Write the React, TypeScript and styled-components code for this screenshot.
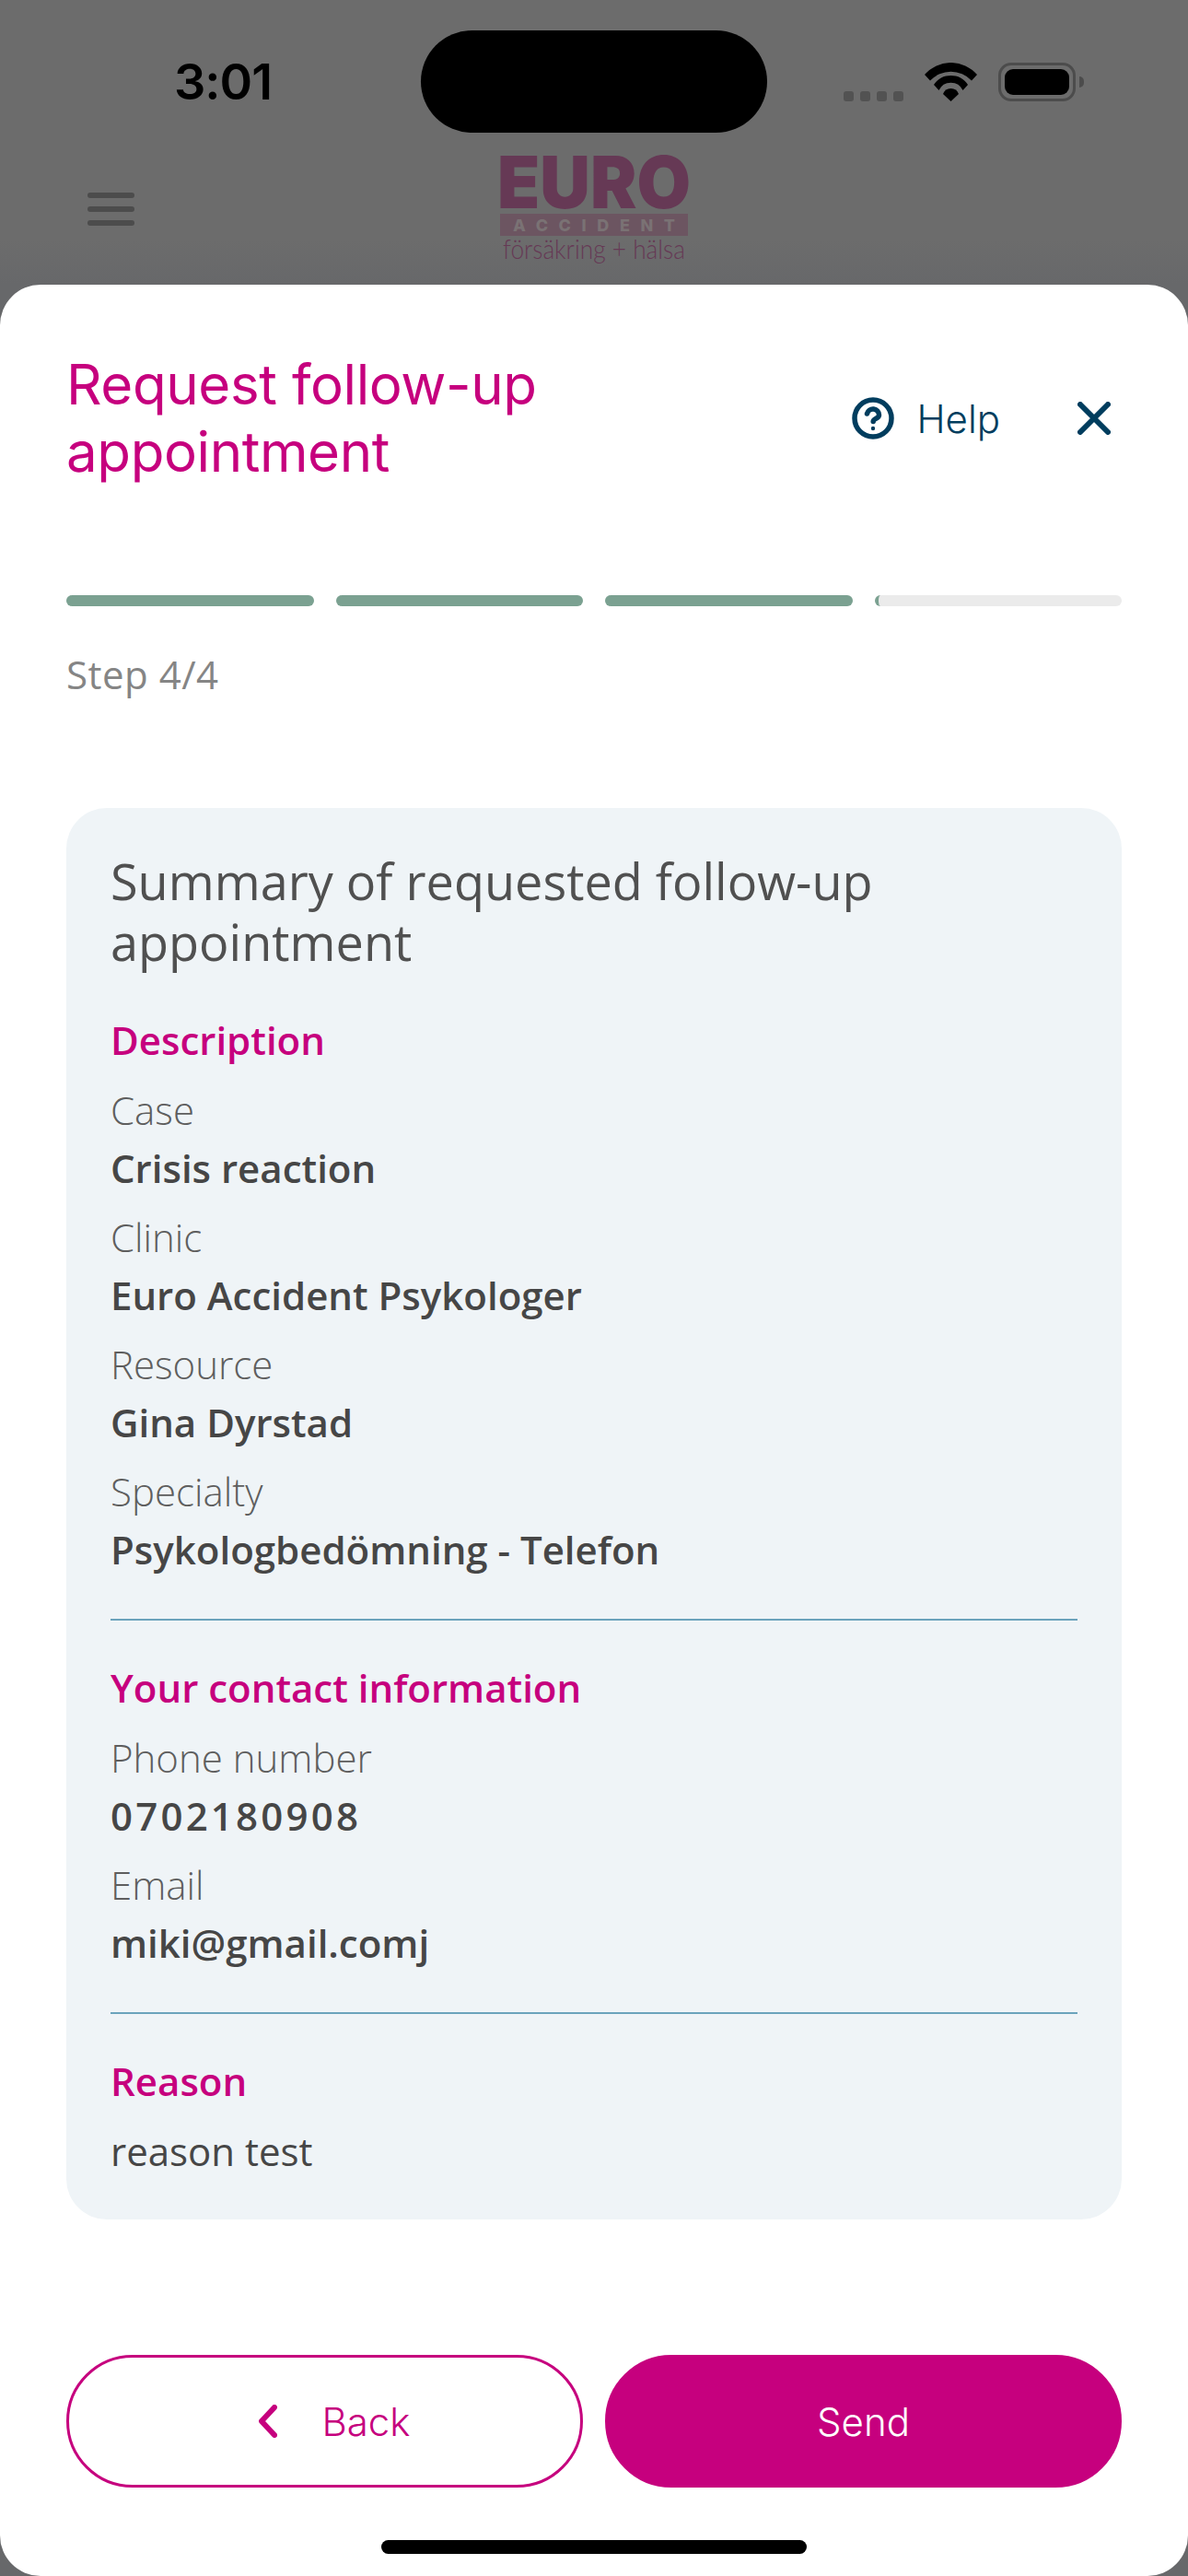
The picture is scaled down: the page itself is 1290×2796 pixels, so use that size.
import styled, { createGlobalStyle } from "styled-components";

const GlobalStyle = createGlobalStyle`
    html, body {
        margin: 0;
        padding: 0;
        background: #6b6b6b;
    }

    * {
        box-sizing: border-box;
    }
`;

const Screen = styled.div`
    width: 1290px;
    height: 2796px;
    position: relative;
    overflow: hidden;
    display: flex;
    flex-direction: column;
    background: linear-gradient(#6c6c6c, #6c6c6c 260px, #67686a 309px);
    font-family: Inter, "Liberation Sans", sans-serif;
`;

const StatusBar = styled.div`
    display: grid;
    grid-template-columns: 457px 376px 1fr;
    align-items: center;
    height: 111px;
    margin-top: 33px;
`;

const Time = styled.div`
    font-size: 54px;
    font-weight: 600;
    color: #000;
    padding-left: 189px;
    letter-spacing: -1px;
`;

const Island = styled.div`
    height: 111px;
    border-radius: 56px;
    background: #000;
`;

const StatusIcons = styled.div`
    display: flex;
    align-items: flex-end;
    height: 42px;
    padding-left: 83px;
    margin-top: 1px;
`;

const SignalDots = styled.div`
    display: flex;
    gap: 7px;
    margin-right: 23px;
`;

const SignalDot = styled.span`
    width: 11px;
    height: 11px;
    border-radius: 3px;
    background: #525252;
`;

const Battery = styled.div`
    width: 84px;
    height: 42px;
    margin-left: 23px;
    padding: 4px;
    border: 3px solid #4c4c4c;
    border-radius: 14px;
    position: relative;

    &::before {
        content: "";
        display: block;
        height: 100%;
        border-radius: 9px;
        background: #000;
    }

    &::after {
        content: "";
        position: absolute;
        right: -12px;
        top: 12px;
        width: 5px;
        height: 12px;
        border-radius: 0 6px 6px 0;
        background: #4c4c4c;
    }
`;

const Nav = styled.div`
    display: grid;
    grid-template-columns: 1fr auto 1fr;
    align-items: center;
    height: 165px;
`;

const Burger = styled.div`
    display: flex;
    flex-direction: column;
    gap: 9px;
    width: 51px;
    margin-left: 95px;

    span {
        height: 6px;
        border-radius: 3px;
        background: #4c4c4c;
    }
`;

const Sheet = styled.div`
    flex: 1;
    display: flex;
    flex-direction: column;
    padding: 0 72px;
    border-radius: 44px;
    background: #fff;
`;

const SheetHeader = styled.div`
    display: flex;
    justify-content: space-between;
    align-items: center;
    padding-top: 72px;
`;

const Title = styled.h1`
    margin: 0;
    width: 600px;
    font-size: 60px;
    font-weight: 400;
    letter-spacing: -0.4px;
    line-height: 73px;
    color: #c6007e;
`;

const HeaderActions = styled.div`
    display: flex;
    align-items: center;
    margin-right: 12px;
    color: #003d5e;
`;

const HelpLabel = styled.span`
    font-size: 42px;
    font-weight: 300;
    margin-left: 24px;
    margin-right: 84px;
`;

const Progress = styled.div`
    display: grid;
    grid-template-columns: repeat(4, 1fr);
    gap: 24px;
    margin-top: 119px;
`;

const ProgressTrack = styled.div<{ $done?: boolean }>`
    height: 12px;
    border-radius: 6px;
    overflow: hidden;
    background: ${(p) => (p.$done ? "#7ba191" : "#ebebeb")};
    border-left: 4px solid #7ba191;
`;

const StepText = styled.div`
    margin-top: 42px;
    font-family: "Open Sans", "Liberation Sans", sans-serif;
    font-size: 42px;
    line-height: 63px;
    font-weight: 400;
    letter-spacing: 0.5px;
    color: #858585;
`;

const SummaryCard = styled.div`
    margin-top: 114px;
    padding: 46px 48px;
    height: 1532px;
    border-radius: 44px;
    background: #eff4f7;
    font-family: "Open Sans", "Liberation Sans", sans-serif;
`;

const SummaryTitle = styled.h2`
    margin: 0;
    font-size: 54px;
    font-weight: 400;
    line-height: 66px;
    color: #505050;
`;

const SectionHeading = styled.h3<{ $first?: boolean }>`
    margin: ${(p) => (p.$first ? "42px" : "41px")} 0 13px;
    font-size: 42px;
    font-weight: 600;
    line-height: 63px;
    color: #c6007e;
`;

const Field = styled.div`
    margin-top: 12px;
`;

const FieldLabel = styled.div`
    font-size: 42px;
    font-weight: 300;
    line-height: 63px;
    color: #5e5e5e;
`;

const FieldValue = styled.div<{ $numeric?: boolean }>`
    font-size: 42px;
    font-weight: 600;
    line-height: 63px;
    letter-spacing: ${(p) => (p.$numeric ? "3.2px" : "normal")};
    color: #464646;
`;

const Divider = styled.hr`
    height: 2px;
    margin: 44px 0 0;
    border: 0;
    background: #6ba3bc;
`;

const ReasonText = styled.div`
    font-size: 42px;
    font-weight: 400;
    line-height: 63px;
    color: #464646;
`;

const Actions = styled.div`
    display: grid;
    grid-template-columns: repeat(2, 1fr);
    gap: 24px;
    margin-top: auto;
    margin-bottom: 96px;
`;

const ActionButton = styled.button<{ $primary?: boolean }>`
    display: flex;
    align-items: center;
    justify-content: center;
    height: 144px;
    border-radius: 72px;
    border: 3px solid #c6007e;
    background: ${(p) => (p.$primary ? "#c6007e" : "#fff")};
    color: ${(p) => (p.$primary ? "#fff" : "#c6007e")};
    font-family: Inter, "Liberation Sans", sans-serif;
    font-size: 42px;
    font-weight: 300;
    padding: 0;

    svg {
        margin-left: 22px;
        margin-right: 48px;
    }
`;

const HomeBar = styled.div`
    position: absolute;
    left: 414px;
    bottom: 24px;
    width: 462px;
    height: 15px;
    border-radius: 8px;
    background: #000;
`;

const WifiIcon = () => (
    <svg width="57" height="42" viewBox="0 0 57 42" fill="#000">
        <path d="M0 13A37.7 37.7 0 0 1 57 13L51 19.5A31 31 0 0 0 6 19.5Z" />
        <path d="M10 24A22 22 0 0 1 47 24L41.5 30A14.3 14.3 0 0 0 15.5 30Z" />
        <path d="M20 34A9 9 0 0 1 37 34L28.5 42Z" />
    </svg>
);

const HelpIcon = () => (
    <svg width="46" height="46" viewBox="0 0 46 46" fill="none" stroke="#003d5e" strokeWidth="5.5" strokeLinecap="round">
        <circle cx="23" cy="23" r="20" />
        <path d="M16.5 18a6.6 6.6 0 0 1 13 1.5c0 3.8-6.3 4-6.3 7" />
        <circle cx="23" cy="34" r="1.2" fill="#003d5e" strokeWidth="2" />
    </svg>
);

const CloseIcon = () => (
    <svg width="36" height="36" viewBox="0 0 36 36" fill="none" stroke="#003d5e" strokeWidth="6" strokeLinecap="round">
        <path d="M3 3L33 33M33 3L3 33" />
    </svg>
);

const BackIcon = () => (
    <svg width="20" height="36" viewBox="0 0 20 36" fill="none" stroke="#c6007e" strokeWidth="6" strokeLinecap="round" strokeLinejoin="round">
        <path d="M17 3L3 18L17 33" />
    </svg>
);

const Logo = () => (
    <svg width="204" height="164" viewBox="0 -24 204 164" overflow="visible">
        <text x="-3" y="57" fontFamily="Inter" fontWeight="900" fontSize="78" textLength="210" lengthAdjust="spacingAndGlyphs" fill="#663955">EURO</text>
        <rect x="0" y="63" width="204" height="24" fill="#6c5561" />
        <text x="14" y="82" fontFamily="Inter" fontWeight="800" fontSize="18" textLength="176" fill="#7a7274">ACCIDENT</text>
        <text x="3" y="112" fontFamily="Lato" fontWeight="300" fontSize="29" textLength="198" lengthAdjust="spacingAndGlyphs" fill="#663955">försäkring + hälsa</text>
    </svg>
);

interface SummaryField {
    label: string;
    value: string;
    numeric?: boolean;
}

const description: SummaryField[] = [
    { label: "Case", value: "Crisis reaction" },
    { label: "Clinic", value: "Euro Accident Psykologer" },
    { label: "Resource", value: "Gina Dyrstad" },
    { label: "Specialty", value: "Psykologbedömning - Telefon" },
];

const contact: SummaryField[] = [
    { label: "Phone number", value: "0702180908", numeric: true },
    { label: "Email", value: "miki@gmail.comj" },
];

const renderField = (field: SummaryField) => (
    <Field key={field.label}>
        <FieldLabel>{field.label}</FieldLabel>
        <FieldValue $numeric={field.numeric}>{field.value}</FieldValue>
    </Field>
);

const App = () => {
    return (
        <Screen>
            <GlobalStyle />

            <StatusBar>
                <Time>3:01</Time>
                <Island />
                <StatusIcons>
                    <SignalDots>
                        <SignalDot />
                        <SignalDot />
                        <SignalDot />
                        <SignalDot />
                    </SignalDots>
                    <WifiIcon />
                    <Battery />
                </StatusIcons>
            </StatusBar>

            <Nav>
                <Burger>
                    <span />
                    <span />
                    <span />
                </Burger>
                <Logo />
            </Nav>

            <Sheet>
                <SheetHeader>
                    <Title>Request follow-up appointment</Title>
                    <HeaderActions>
                        <HelpIcon />
                        <HelpLabel>Help</HelpLabel>
                        <CloseIcon />
                    </HeaderActions>
                </SheetHeader>

                <Progress>
                    <ProgressTrack $done />
                    <ProgressTrack $done />
                    <ProgressTrack $done />
                    <ProgressTrack />
                </Progress>

                <StepText>Step 4/4</StepText>

                <SummaryCard>
                    <SummaryTitle>Summary of requested follow-up appointment</SummaryTitle>

                    <SectionHeading $first>Description</SectionHeading>
                    {description.map(renderField)}

                    <Divider />

                    <SectionHeading>Your contact information</SectionHeading>
                    {contact.map(renderField)}

                    <Divider />

                    <SectionHeading>Reason</SectionHeading>
                    <ReasonText>reason test</ReasonText>
                </SummaryCard>

                <Actions>
                    <ActionButton>
                        <BackIcon />
                        Back
                    </ActionButton>
                    <ActionButton $primary>Send</ActionButton>
                </Actions>
            </Sheet>

            <HomeBar />
        </Screen>
    );
};

export default App;
